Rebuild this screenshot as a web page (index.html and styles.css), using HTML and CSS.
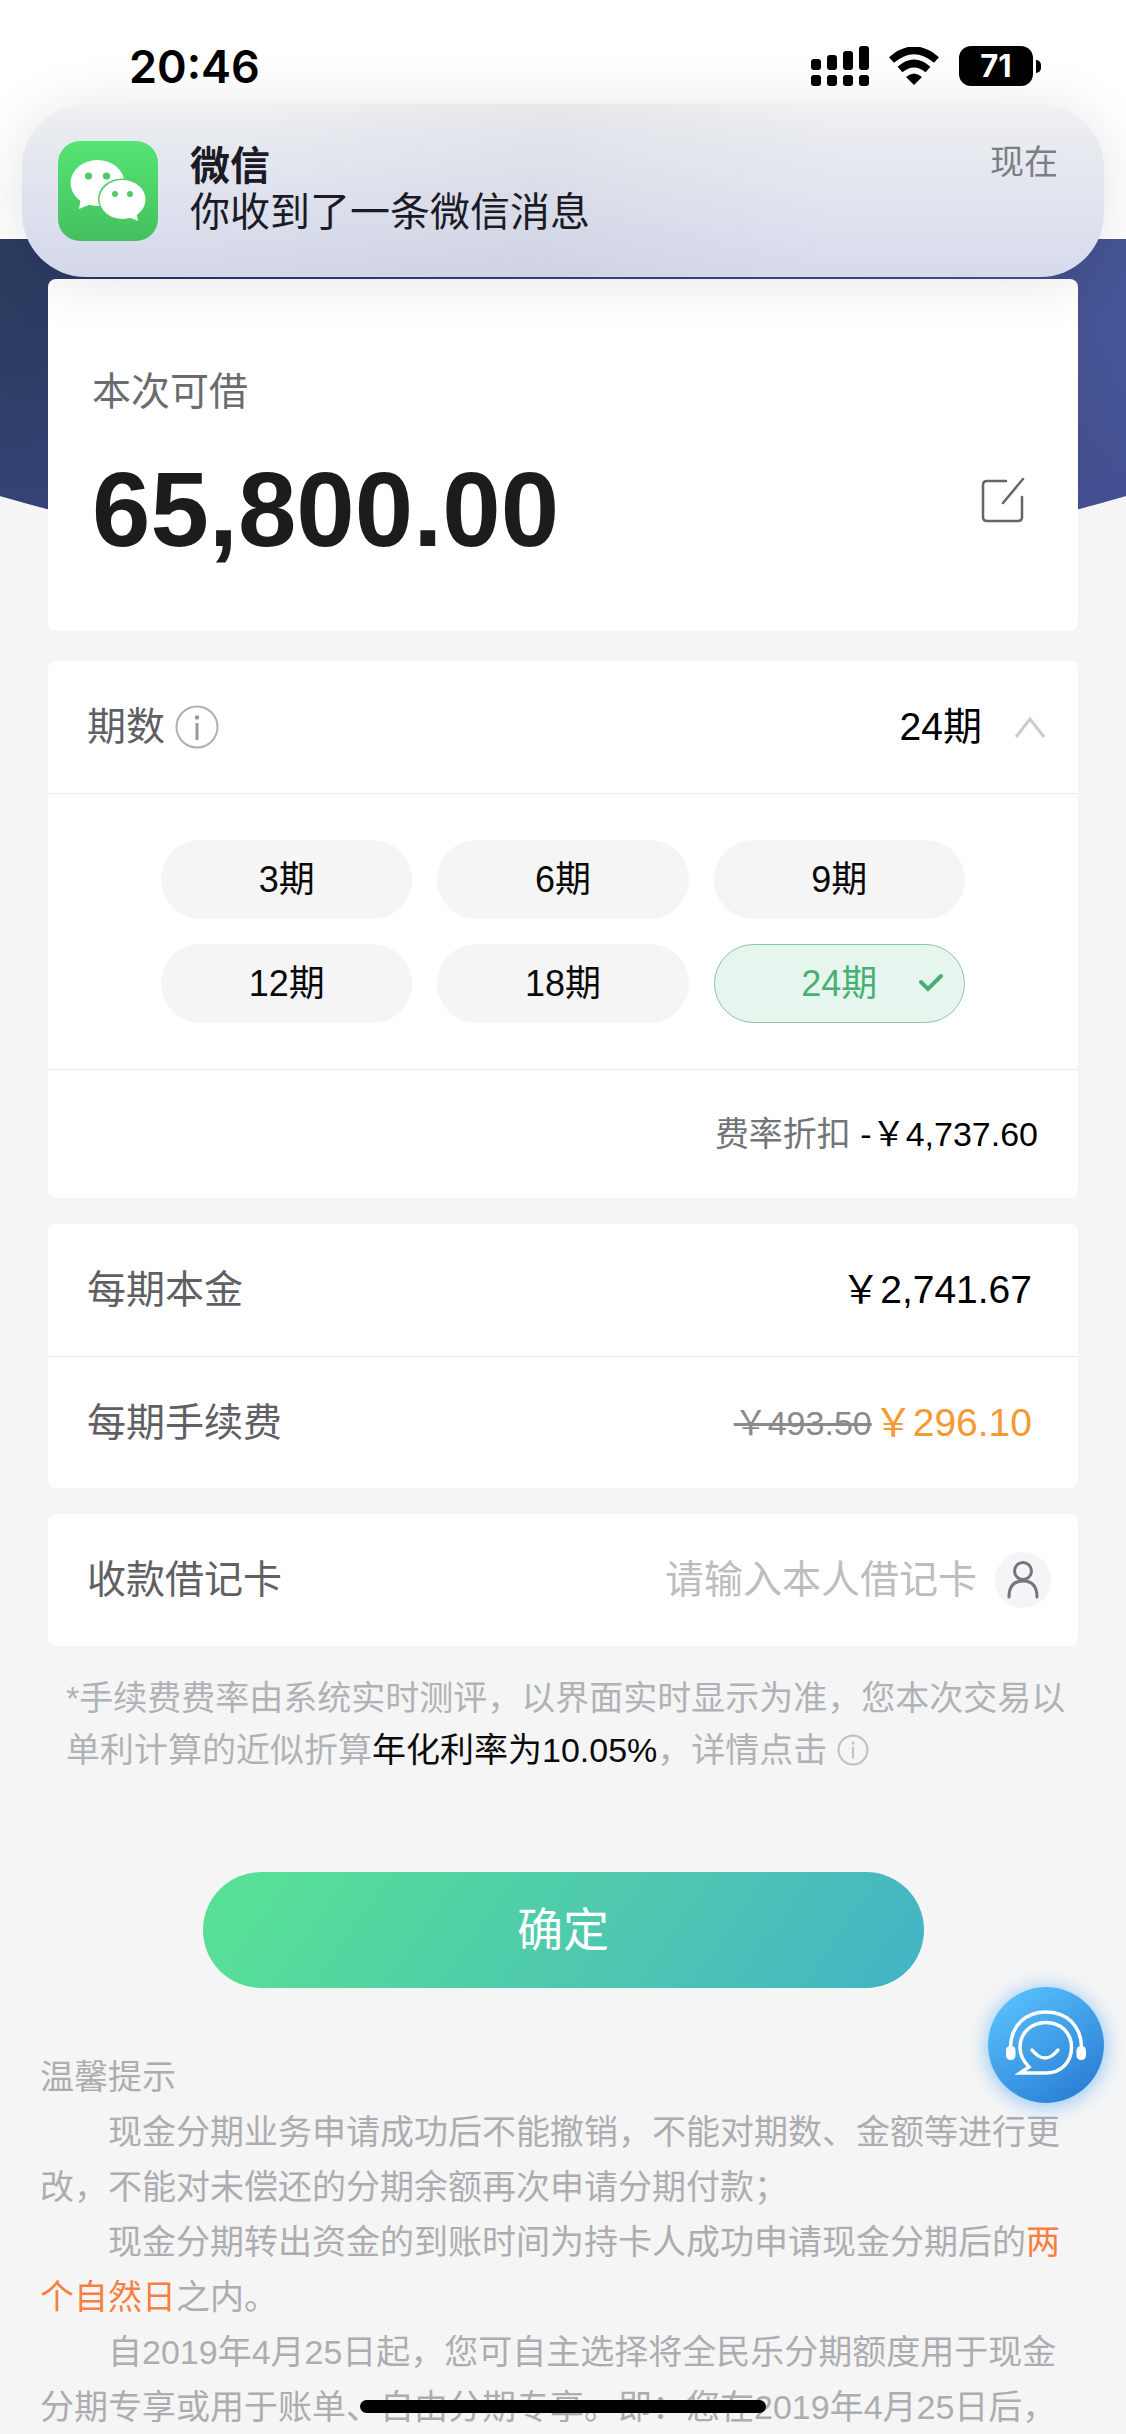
FILE: index.html
```html
<!DOCTYPE html>
<html lang="zh-CN">
<head>
<meta charset="utf-8">
<meta name="viewport" content="width=device-width, initial-scale=1">
<title>现金分期</title>
<link rel="stylesheet" href="styles.css">
</head>
<body>
<div class="page">
  <svg class="hero" viewBox="0 0 1126 340" preserveAspectRatio="none" aria-hidden="true">
    <defs>
      <linearGradient id="heroFill" x1="0" y1="0" x2="1" y2="0">
        <stop offset="0" stop-color="#2a3c60"/>
        <stop offset="0.06" stop-color="#2b3b62"/>
        <stop offset="0.2" stop-color="#2f3672"/>
        <stop offset="0.95" stop-color="#455292"/>
        <stop offset="1" stop-color="#455595"/>
      </linearGradient>
      <linearGradient id="heroShade" x1="0" y1="0" x2="0" y2="1">
        <stop offset="0.25" stop-color="#40508c" stop-opacity="0"/>
        <stop offset="0.8" stop-color="#404a8c" stop-opacity="0.5"/>
      </linearGradient>
    </defs>
    <path d="M0 0H1126V257Q563 420 0 257Z" fill="url(#heroFill)"/>
    <path d="M0 0H1126V257Q563 420 0 257Z" fill="url(#heroShade)"/>
  </svg>

  <header class="status">
    <time class="clock">20:46</time>
    <div class="status-icons">
      <svg class="signal" viewBox="0 0 58 40" aria-hidden="true">
        <rect x="0" y="13" width="10" height="11" rx="3"/><rect x="16" y="9" width="10" height="15" rx="3"/><rect x="32" y="5" width="10" height="19" rx="3"/><rect x="48" y="0" width="10" height="24" rx="3"/>
        <rect x="0" y="29" width="10" height="11" rx="3"/><rect x="16" y="29" width="10" height="11" rx="3"/><rect x="32" y="29" width="10" height="11" rx="3"/><rect x="48" y="29" width="10" height="11" rx="3"/>
      </svg>
      <svg class="wifi" viewBox="0 0 50 38" aria-hidden="true">
        <path d="M2.500 13Q25 -6.500 47.500 13" fill="none" stroke="#000" stroke-width="7.500"/>
        <path d="M11 22.500Q25 10.500 39 22.500" fill="none" stroke="#000" stroke-width="7.500"/>
        <path d="M17 30Q25 23 33 30L25 38Z"/>
      </svg>
      <div class="battery"><span class="level">71</span><span class="nub"></span></div>
    </div>
  </header>

  <aside class="banner">
    <svg class="wechat" viewBox="0 0 100 100" role="img" aria-label="微信">
      <defs><linearGradient id="wx" x1="0" y1="0" x2="0" y2="1"><stop offset="0" stop-color="#55e573"/><stop offset="1" stop-color="#45bf5f"/></linearGradient></defs>
      <rect width="100" height="100" rx="22" fill="url(#wx)"/>
      <ellipse cx="39.500" cy="42" rx="27" ry="23" fill="#fff"/>
      <path d="M23 56L21 68L33 63Z" fill="#fff"/>
      <ellipse cx="64" cy="58" rx="24" ry="20.500" fill="#4ccd68"/>
      <ellipse cx="64.500" cy="58.500" rx="23" ry="19.500" fill="#fff"/>
      <path d="M70 76L80 80L78 70Z" fill="#fff"/>
      <g fill="#4dcb69"><circle cx="30.500" cy="35" r="3.600"/><circle cx="48.500" cy="35" r="3.600"/><circle cx="57" cy="53" r="3"/><circle cx="72" cy="53" r="3"/></g>
    </svg>
    <div class="banner-text">
      <strong>微信</strong>
      <p>你收到了一条微信消息</p>
    </div>
    <span class="banner-time">现在</span>
  </aside>

  <main class="content">
    <section class="card limit">
      <h1 class="limit-label">本次可借</h1>
      <div class="limit-row">
        <p class="amount">65,800.00</p>
        <button class="edit" type="button" aria-label="修改金额">
          <svg viewBox="0 0 46 46" aria-hidden="true"><path d="M26 4H7Q3 4 3 8V40Q3 44 7 44H38Q42 44 42 40V20M43 2L23 26" fill="none" stroke="#666" stroke-width="2.500" stroke-linecap="round"/></svg>
        </button>
      </div>
    </section>

    <section class="card terms">
      <div class="row">
        <span class="label with-icon">期数
          <svg class="info" viewBox="0 0 44 44" aria-hidden="true"><circle cx="22" cy="22" r="20.500" fill="none" stroke="#b0b0b0" stroke-width="2"/><circle cx="22" cy="12.500" r="2.200" fill="#999"/><path d="M22 18V35" stroke="#999" stroke-width="3"/></svg>
        </span>
        <button class="current" type="button" aria-expanded="true">24期
          <svg class="chevron" viewBox="0 0 32 24" aria-hidden="true"><path d="M2 22L16 4L30 22" fill="none" stroke="#ccc" stroke-width="3"/></svg>
        </button>
      </div>
      <div class="options" role="radiogroup" aria-label="期数">
        <label class="option"><input type="radio" name="term" value="3"><span>3期</span></label>
        <label class="option"><input type="radio" name="term" value="6"><span>6期</span></label>
        <label class="option"><input type="radio" name="term" value="9"><span>9期</span></label>
        <label class="option"><input type="radio" name="term" value="12"><span>12期</span></label>
        <label class="option"><input type="radio" name="term" value="18"><span>18期</span></label>
        <label class="option"><input type="radio" name="term" value="24" checked><span>24期</span>
          <svg class="tick" viewBox="0 0 26 20" aria-hidden="true"><path d="M3 9L10 16L23 3" fill="none" stroke="#48b073" stroke-width="4" stroke-linecap="round"/></svg></label>
      </div>
      <div class="discount"><span class="discount-label">费率折扣</span> -￥4,737.60</div>
    </section>

    <section class="card">
      <div class="row">
        <span class="label">每期本金</span>
        <span class="value">￥2,741.67</span>
      </div>
      <div class="row split">
        <span class="label">每期手续费</span>
        <span class="value fee"><del>￥493.50</del><ins>￥296.10</ins></span>
      </div>
    </section>

    <section class="card">
      <div class="row card-row">
        <label class="label" for="debit">收款借记卡</label>
        <input class="debit" id="debit" type="text" placeholder="请输入本人借记卡">
        <button class="person" type="button" aria-label="选择借记卡">
          <svg viewBox="0 0 56 56" aria-hidden="true"><g fill="none" stroke="#74767c" stroke-width="3" stroke-linecap="round"><circle cx="28" cy="19" r="8.500"/><path d="M14 45Q14 29 28 29T42 45"/></g></svg>
        </button>
      </div>
    </section>

    <p class="rate">*手续费费率由系统实时测评，以界面实时显示为准，您本次交易以单利计算的近似折算<b>年化利率为10.05%</b>，详情点击
      <svg class="info-small" viewBox="0 0 30 30" aria-hidden="true"><circle cx="15" cy="15" r="13.500" fill="none" stroke="#bcc4c8" stroke-width="2"/><circle cx="15" cy="8.500" r="1.500" fill="#bcc4c8"/><path d="M15 12V23" stroke="#bcc4c8" stroke-width="2"/></svg>
    </p>

    <button class="submit" type="button">确定</button>
  </main>

  <section class="notes">
    <h2>温馨提示</h2>
    <p>现金分期业务申请成功后不能撤销，不能对期数、金额等进行更改，不能对未偿还的分期余额再次申请分期付款；</p>
    <p>现金分期转出资金的到账时间为持卡人成功申请现金分期后的<em>两个自然日</em>之内。</p>
    <p>自2019年4月25日起，您可自主选择将全民乐分期额度用于现金分期专享或用于账单、自由分期专享。即：您在2019年4月25日后，</p>
  </section>
</div>

<button class="support" type="button" aria-label="在线客服">
  <svg viewBox="0 0 116 116" aria-hidden="true">
    <g fill="none" stroke="#fff" stroke-width="3.500" stroke-linecap="round">
      <path d="M22.500 60C23 38 38 25 58 25S93 38 93.500 60"/>
      <path d="M58 86C73 86 83.500 75 83.500 60.500S73 35.500 58 35.500S32 46 32 60.500C32 69 36 75 41 80L32 86Z" stroke-linejoin="miter"/>
      <path d="M44 63Q57 79 70 63"/>
    </g>
    <g fill="#fff"><rect x="18" y="59" width="9.500" height="14" rx="4.500"/><rect x="88.500" y="59" width="9.500" height="14" rx="4.500"/></g>
  </svg>
</button>
<div class="home-bar"></div>
</body>
</html>
```
FILE: styles.css
```css
* { box-sizing: border-box; }

body {
  margin: 0;
  background: #f5f5f5;
  color: #111;
  font-family: "Liberation Sans", "Noto Sans CJK SC", sans-serif;
  font-size: 39px;
  line-height: 48px;
}

h1, h2, p { margin: 0; font-weight: 400; }

button {
  padding: 0;
  border: 0;
  background: none;
  color: inherit;
  font: inherit;
}

svg { display: block; }

.page {
  position: relative;
  background: linear-gradient(#fff, #fff) top / 100% 239px no-repeat;
}

/* blue curve behind the first card */
.hero {
  position: absolute;
  top: 239px;
  left: 0;
  width: 100%;
  height: 340px;
}

/* status bar */
.status {
  position: relative;
  z-index: 2;
  display: flex;
  justify-content: space-between;
  align-items: center;
  height: 104px;
  padding: 28px 85px 0 129px;
}

.clock {
  padding-top: 2px;
  font: 600 45px/48px Inter, sans-serif;
  color: #000;
}

.status-icons { display: flex; align-items: center; gap: 20px; }
.signal { width: 58px; height: 40px; }
.wifi { width: 50px; height: 38px; }

.battery { display: flex; align-items: center; gap: 3px; }

.level {
  width: 74px;
  border-radius: 12px;
  background: #000;
  color: #fff;
  font: 700 31px/40px Inter, sans-serif;
  text-align: center;
}

.nub {
  width: 5px;
  height: 13px;
  border-radius: 0 6px 6px 0;
  background: #000;
}

/* notification banner */
.banner {
  position: relative;
  z-index: 1;
  display: flex;
  align-items: center;
  gap: 32px;
  height: 173px;
  margin: 0 22px;
  padding: 0 46px 0 36px;
  border-radius: 64px;
  background:
    linear-gradient(100deg, rgba(190, 195, 215, 0) 20%, rgba(180, 186, 195, 0.14) 48%, rgba(255, 255, 255, 0.08) 75%),
    linear-gradient(#eff1f2, #e7eaef 20%, #dfe2ee 55%, #d3d7ea);
  box-shadow: 0 4px 60px rgba(0, 0, 0, 0.11);
}

.wechat { width: 100px; height: 100px; }

.banner-text {
  flex: 1;
  padding-bottom: 4px;
  color: #1b1b26;
  font-size: 40px;
  line-height: 46px;
}

.banner-text strong { font-weight: 700; }

.banner-time {
  align-self: flex-start;
  margin-top: 34px;
  color: #7d7e84;
  font-size: 34px;
  line-height: 48px;
}

/* cards */
.content {
  position: relative;
  display: flex;
  flex-direction: column;
  gap: 26px;
  padding: 2px 48px 0;
}

.card { border-radius: 8px; background: #fff; }

.limit { margin-bottom: 4px; padding: 83px 52px 61px 44px; }
.limit-label { color: #6b6c70; font-size: 39px; line-height: 60px; }

.limit-row {
  display: flex;
  justify-content: space-between;
  align-items: flex-start;
  margin-top: 28px;
}

.amount {
  color: #1c1c1c;
  font-size: 105px;
  font-weight: 700;
  line-height: 120px;
}

.edit { height: 100px; }
.edit svg { width: 46px; height: 46px; }

.row {
  display: flex;
  justify-content: space-between;
  align-items: center;
  height: 132px;
  padding: 0 46px 0 39px;
}

.split { border-top: 1px solid #eaeaea; }
.label { color: #5f6063; }
.with-icon { display: flex; align-items: center; gap: 10px; }
.info { width: 44px; height: 44px; }

.current {
  display: flex;
  align-items: center;
  gap: 32px;
  color: #000;
}

.terms .row { padding-right: 32px; }
.chevron { width: 32px; height: 24px; }

.options {
  display: grid;
  grid-template-columns: repeat(3, 1fr);
  gap: 25px;
  padding: 46px 113px;
  border-block: 1px solid #eaeaea;
}

.option {
  position: relative;
  border: 1px solid transparent;
  border-radius: 40px;
  background: #f5f5f5;
  color: #0a0a0a;
  font-size: 36px;
  line-height: 77px;
  text-align: center;
}

.option input { position: absolute; margin: 0; opacity: 0; }

.option:has(:checked) {
  border-color: #8cc5a4;
  background: #e7f5ef;
  color: #48b073;
}

.tick {
  position: absolute;
  top: 28px;
  right: 20px;
  width: 26px;
  height: 20px;
}

.discount {
  padding: 0 40px 0 39px;
  color: #000;
  font-size: 34px;
  line-height: 128px;
  text-align: right;
}

.discount-label { color: #737478; }

.value { color: #000; }
.fee { display: flex; align-items: center; gap: 2px; }
.fee del { color: #8a8a8a; font-size: 34px; }
.fee ins { color: #f39a35; text-decoration: none; }

.card-row { gap: 18px; padding-right: 27px; }

.debit {
  flex: 1;
  min-width: 0;
  padding: 0;
  border: 0;
  background: none;
  color: #111;
  font: inherit;
  text-align: right;
}

.debit::placeholder { color: #bdbdbf; }

.person {
  width: 56px;
  height: 56px;
  border-radius: 50%;
  background: #f5f5f7;
}

/* rate note */
.rate {
  padding: 0 2px 0 18px;
  color: #b0b2b5;
  font-size: 34px;
  line-height: 52px;
}

.rate b { color: #0a0a0a; font-weight: 400; }

.info-small {
  display: inline-block;
  width: 32px;
  height: 32px;
  vertical-align: -4px;
}

.submit {
  align-self: center;
  width: 70%;
  margin-top: 70px;
  border-radius: 58px;
  background: linear-gradient(125deg, #57df96 8%, #4fcbac 50%, #43b3c6);
  color: #fff;
  font-size: 46px;
  line-height: 116px;
}

/* notes */
.notes {
  padding: 62px 40px 0;
  color: #adadb1;
  font-size: 34px;
  line-height: 55px;
}

.notes h2 { font-size: 34px; }
.notes p { text-indent: 2em; }
.notes em { color: #f77f42; font-style: normal; }

/* floating parts */
.support {
  position: fixed;
  right: 22px;
  bottom: 331px;
  width: 116px;
  height: 116px;
  border-radius: 50%;
  background: linear-gradient(145deg, #58c0fc 10%, #2b7fd6 88%);
  box-shadow: 0 2px 20px rgba(90, 175, 250, 0.75);
}

.home-bar {
  position: fixed;
  bottom: 21px;
  left: 32%;
  width: 36%;
  height: 13px;
  border-radius: 7px;
  background: #000;
}
```
